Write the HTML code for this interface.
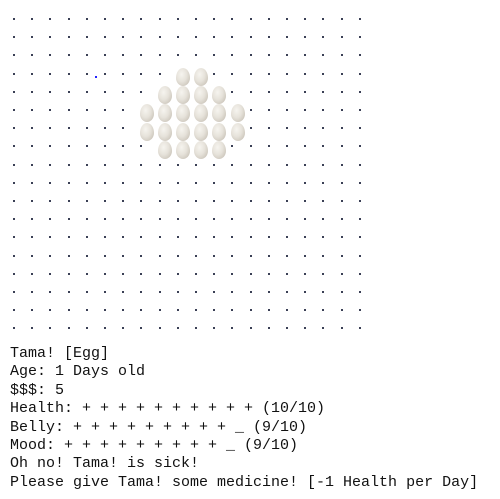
<!DOCTYPE html>
<html><head><meta charset="utf-8"><style>
html,body{margin:0;padding:0;background:#fff;width:500px;height:499px;overflow:hidden;position:relative}
.d{position:absolute;width:2px;height:2px;background:#3a3f55}
.e{position:absolute;width:14px;height:18px;border-radius:50% 50% 50% 50%/55% 55% 45% 45%;background:radial-gradient(ellipse at 40% 35%,#f6f4ef 0%,#e6e2da 45%,#c9c3b8 85%,#b3ac9f 100%)}
pre{position:absolute;left:10px;top:345px;margin:0;font:15px/18.4px "Liberation Mono",monospace;color:#111}
</style></head><body>
<div id="g"></div>
<pre>Tama! [Egg]
Age: 1 Days old
$$$: 5
Health: + + + + + + + + + + (10/10)
Belly: + + + + + + + + + _ (9/10)
Mood: + + + + + + + + + _ (9/10)
Oh no! Tama! is sick!
Please give Tama! some medicine! [-1 Health per Day]</pre>
<script>
var eggs={3:[9,10],4:[8,9,10,11],5:[7,8,9,10,11,12],6:[7,8,9,10,11,12],7:[8,9,10,11]};
var h='';
for(var r=0;r<18;r++){for(var c=0;c<20;c++){
 var isE=eggs[r]&&eggs[r].indexOf(c)>=0;
 if(isE){h+='<div class="e" style="left:'+(176+(c-9)*18.2).toFixed(1)+'px;top:'+(68+(r-3)*18.2).toFixed(1)+'px"></div>';}
 else{h+='<div class="d" style="left:'+Math.round(13+c*18.2)+'px;top:'+Math.round(18+r*18.2)+'px"></div>';}
}}
h+='<div class="d" style="left:95px;top:76px;background:#22f"></div>';
document.getElementById('g').innerHTML=h;
</script>
</body></html>
